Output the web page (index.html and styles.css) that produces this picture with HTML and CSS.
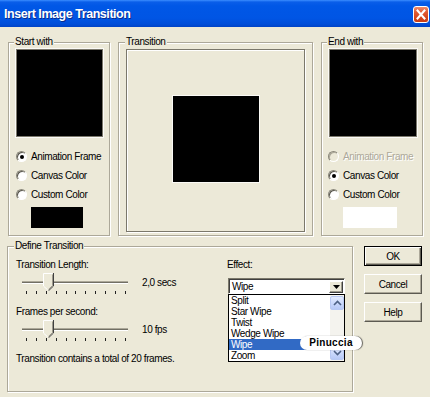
FILE: index.html
```html
<!DOCTYPE html>
<html>
<head>
<meta charset="utf-8">
<title>Insert Image Transition</title>
<link rel="stylesheet" href="styles.css">
</head>
<body>
<div class="window">
  <div class="titlebar">
    <span class="title">Insert Image Transition</span>
    <span class="close"><svg width="14" height="15" viewBox="0 0 14 15"><path d="M3.5 3.5 L10.5 11.5 M10.5 3.5 L3.5 11.5" stroke="#fff" stroke-width="2" stroke-linecap="square"/></svg></span>
  </div>
  <div class="content">
    <div class="top-row">
      <fieldset class="group side start">
        <legend>Start with</legend>
        <div class="gbody">
          <div class="preview"></div>
          <div class="radios">
            <div class="radio checked"><span class="circle"></span>Animation Frame</div>
            <div class="radio"><span class="circle"></span>Canvas Color</div>
            <div class="radio"><span class="circle"></span>Custom Color</div>
          </div>
          <div class="swatch black"></div>
        </div>
      </fieldset>
      <fieldset class="group trans">
        <legend>Transition</legend>
        <div class="gbody">
          <div class="frame"><div class="square"></div></div>
        </div>
      </fieldset>
      <fieldset class="group side end">
        <legend>End with</legend>
        <div class="gbody">
          <div class="preview"></div>
          <div class="radios">
            <div class="radio disabled"><span class="circle"></span>Animation Frame</div>
            <div class="radio checked"><span class="circle"></span>Canvas Color</div>
            <div class="radio"><span class="circle"></span>Custom Color</div>
          </div>
          <div class="swatch white"></div>
        </div>
      </fieldset>
    </div>
    <div class="bottom-row">
      <fieldset class="group define">
        <legend>Define Transition</legend>
        <div class="gbody define-body">
          <div class="left-col">
            <div class="lbl first">Transition Length:</div>
            <div class="slider-row">
              <div class="slider">
                <div class="track"></div>
                <svg class="thumb" width="11" height="18" viewBox="0 0 11 18"><path d="M0.5 0.5 H10.5 V13 L5.5 17.5 L0.5 13 Z" fill="#ece9d8"/><path d="M0.5 13 V0.5 H9.5" stroke="#fff" fill="none"/><path d="M10.5 0 V13 L5.5 17.8" stroke="#404040" fill="none"/><path d="M9.5 1.5 V12.6 L5.5 16.4" stroke="#9d9a8c" fill="none"/><path d="M0.6 13.2 L4.6 16.8" stroke="#fff" fill="none"/></svg>
                <div class="ticks"><i></i><i></i><i></i><i></i><i></i><i></i><i></i><i></i><i></i><i></i><i></i></div>
              </div>
              <span class="value">2,0 secs</span>
            </div>
            <div class="lbl second">Frames per second:</div>
            <div class="slider-row">
              <div class="slider">
                <div class="track"></div>
                <svg class="thumb" width="11" height="18" viewBox="0 0 11 18"><path d="M0.5 0.5 H10.5 V13 L5.5 17.5 L0.5 13 Z" fill="#ece9d8"/><path d="M0.5 13 V0.5 H9.5" stroke="#fff" fill="none"/><path d="M10.5 0 V13 L5.5 17.8" stroke="#404040" fill="none"/><path d="M9.5 1.5 V12.6 L5.5 16.4" stroke="#9d9a8c" fill="none"/><path d="M0.6 13.2 L4.6 16.8" stroke="#fff" fill="none"/></svg>
                <div class="ticks"><i></i><i></i><i></i><i></i><i></i><i></i><i></i><i></i><i></i><i></i><i></i></div>
              </div>
              <span class="value">10 fps</span>
            </div>
            <div class="summary">Transition contains a total of 20 frames.</div>
          </div>
          <div class="right-col">
            <div class="lbl first">Effect:</div>
            <div class="combo">
              <span class="combo-text">Wipe</span>
              <span class="combo-btn"><svg width="7" height="4" viewBox="0 0 7 4"><path d="M0 0 H7 L3.5 4 Z" fill="#000"/></svg></span>
            </div>
            <div class="listbox">
              <ul class="items">
                <li>Split</li>
                <li>Star Wipe</li>
                <li>Twist</li>
                <li>Wedge Wipe</li>
                <li class="sel">Wipe</li>
                <li>Zoom</li>
              </ul>
              <div class="vscroll">
                <span class="sbtn"><svg width="9" height="6" viewBox="0 0 9 6"><path d="M1 5 L4.5 1.5 L8 5" stroke="#4d6185" stroke-width="1.6" fill="none"/></svg></span>
                <span class="strack"></span>
                <span class="sbtn"><svg width="9" height="6" viewBox="0 0 9 6"><path d="M1 1 L4.5 4.5 L8 1" stroke="#4d6185" stroke-width="1.6" fill="none"/></svg></span>
              </div>
            </div>
          </div>
        </div>
      </fieldset>
      <div class="buttons">
        <div class="btn default">OK</div>
        <div class="btn">Cancel</div>
        <div class="btn">Help</div>
      </div>
    </div>
  </div>
  <div class="watermark">Pinuccia</div>
</div>
</body>
</html>
```

FILE: styles.css
```css
* { box-sizing: border-box; }
html, body { margin: 0; padding: 0; }
body {
  width: 430px;
  height: 397px;
  overflow: hidden;
  background: #ece9d8;
  font-family: "Liberation Sans", Arial, sans-serif;
  font-size: 10px;
  letter-spacing: -0.4px;
  color: #000;
}
.window { position: relative; width: 430px; height: 397px; }

.titlebar {
  height: 27px;
  background: linear-gradient(180deg, #3b8dff 0px, #0a5ee9 2px, #0057e6 6px, #0055e4 18px, #004ed9 24px, #0043c6 27px);
  display: flex;
  justify-content: space-between;
  align-items: center;
  padding: 0 1px 0 4px;
}
.title {
  color: #fff;
  font-weight: bold;
  font-size: 12.5px;
  letter-spacing: -0.45px;
  text-shadow: 1px 1px 0 #0a2c8c;
  margin-top: 1px;
}
.close {
  width: 16px;
  height: 17px;
  margin-top: 1px;
  border: 1px solid #fff;
  border-radius: 3px;
  background: linear-gradient(180deg, #f08c6c 0%, #e05a33 35%, #d4461e 70%, #c83c14 100%);
  display: flex;
  align-items: center;
  justify-content: center;
}

.content { padding: 8px 0 0 8px; }
.top-row { display: flex; gap: 8px; height: 201px; }

.group {
  margin: 0;
  padding: 0;
  min-width: 0;
  border: 1px solid #aca899;
  box-shadow: inset 1px 1px 0 #fff, 1px 1px 0 #fff;
}
.group legend {
  padding: 0 1px;
  margin-left: 5px;
  line-height: 14px;
  background: #ece9d8;
}
.side { width: 102px; }
.trans { width: 195px; }
.trans legend { margin-left: 6px; }

.start .gbody { padding: 0 6px 0 7px; }
.end .gbody { padding: 0 5px 0 7px; }

.preview {
  width: 87px;
  height: 88px;
  background: #000;
  border: 1px solid #7b786b;
  box-shadow: 0 0 0 1px #fbfaf6;
}
.end .preview { width: 88px; }

.radios { margin-top: 10px; }
.radio {
  height: 19px;
  display: flex;
  align-items: center;
  white-space: nowrap;
}
.end .radio { margin-left: -1px; }
.circle {
  position: relative;
  width: 11px;
  height: 11px;
  margin-right: 4px;
  border-radius: 50%;
  background: #fff;
  border: 1px solid;
  border-color: #8a877a #fff #fff #8a877a;
  box-shadow: inset 1px 1px 0 #5a584f;
  flex: none;
}
.checked .circle::after {
  content: "";
  position: absolute;
  left: 3px;
  top: 3px;
  width: 4px;
  height: 4px;
  border-radius: 50%;
  background: #000;
}
.disabled { color: #aca899; text-shadow: 1px 1px 0 #fff; }
.disabled .circle { background: #ece9d8; box-shadow: inset 1px 1px 0 #aca899; }

.swatch { margin-top: 3px; margin-left: 15px; width: 52px; height: 21px; }
.swatch.black { background: #000; }
.swatch.white { background: #fff; width: 54px; margin-left: 14px; }

.trans .gbody { padding: 0 7px; }
.frame {
  width: 179px;
  height: 183px;
  border: 1px solid #7b786b;
  box-shadow: inset 1px 1px 0 #fff, 1px 1px 0 #fff;
  display: flex;
  align-items: center;
  justify-content: center;
}
.square {
  width: 88px;
  height: 88px;
  background: #000;
  border: 1px solid #fbfaf6;
  margin: -3px 0 0 1px;
}

.bottom-row { display: flex; margin-top: 3px; }
.define { width: 346px; height: 153px; margin-left: -1px; }
.define legend { margin-left: 6px; }
.define-body {
  display: grid;
  grid-template-columns: 211px 118px;
  padding-left: 8px;
}
.lbl { line-height: 13px; }
.lbl.first { margin-top: 5px; }
.lbl.second { margin-top: 10px; }
.slider-row { display: flex; align-items: flex-start; margin-top: 2px; height: 22px; }
.slider { position: relative; width: 106px; height: 22px; margin-left: 6px; }
.track {
  margin-top: 8px;
  height: 3px;
  background: #716f64;
  border-top: 1px solid #aca899;
  border-bottom: 1px solid #fff;
}
.thumb { position: absolute; left: 21px; top: 0; }
.ticks {
  margin-top: 7px;
  margin-left: 4px;
  width: 100px;
  display: flex;
  justify-content: space-between;
}
.ticks i { display: block; width: 1px; height: 3px; background: #222; }
.value { margin-left: 14px; margin-top: 3px; line-height: 13px; white-space: nowrap; }
.summary { margin-top: 10px; line-height: 13px; white-space: nowrap; }

.combo {
  margin-top: 7px;
  margin-left: 1px;
  width: 117px;
  height: 16px;
  background: #fff;
  border: 1px solid;
  border-color: #7b786b #fff #fff #7b786b;
  box-shadow: inset 1px 1px 0 #404040;
  display: flex;
  align-items: center;
  padding: 1px 1px 0 3px;
}
.combo-text { line-height: 12px; }
.combo-btn {
  margin-left: auto;
  width: 14px;
  height: 12px;
  background: #ece9d8;
  border: 1px solid;
  border-color: #fff #404040 #404040 #fff;
  box-shadow: inset -1px -1px 0 #9d9a8c;
  display: flex;
  align-items: center;
  justify-content: center;
}
.listbox {
  margin-left: 1px;
  width: 117px;
  height: 68px;
  border: 1px solid #000;
  background: #fff;
  display: flex;
}
.items { flex: 1; list-style: none; margin: 0; padding: 0; }
.items li { height: 11px; line-height: 11px; padding-left: 2px; white-space: nowrap; }
.items li.sel { background: #316ac5; color: #fff; }
.vscroll {
  width: 14px;
  display: flex;
  flex-direction: column;
  background: #f4f3ee;
}
.sbtn {
  height: 14px;
  margin: 1px 0;
  border: 1px solid #b8c9f3;
  border-radius: 2px;
  background: linear-gradient(180deg, #e3ebfd 0%, #c7d6fb 60%, #b7c9f6 100%);
  display: flex;
  align-items: center;
  justify-content: center;
}
.strack { flex: 1; }

.buttons { margin-left: 11px; margin-top: 7px; display: flex; flex-direction: column; gap: 8px; }
.btn {
  width: 58px;
  height: 20px;
  display: flex;
  align-items: center;
  justify-content: center;
  background: #ece9d8;
  border: 1px solid;
  border-color: #fff #5c5a51 #5c5a51 #fff;
  box-shadow: inset -1px -1px 0 #aca899;
}
.btn.default {
  border: 1px solid #000;
  box-shadow: inset 1px 1px 0 #fff, inset -1px -1px 0 #5c5a51, inset -2px -2px 0 #aca899;
}

.watermark {
  position: absolute;
  left: 300px;
  top: 336px;
  width: 62px;
  height: 14px;
  border-radius: 7px;
  background: #fff;
  box-shadow: 1px 0 1px rgba(0,0,0,0.6);
  font-weight: bold;
  font-size: 10px;
  letter-spacing: 0.3px;
  line-height: 14px;
  text-align: center;
  color: #000;
}
```
